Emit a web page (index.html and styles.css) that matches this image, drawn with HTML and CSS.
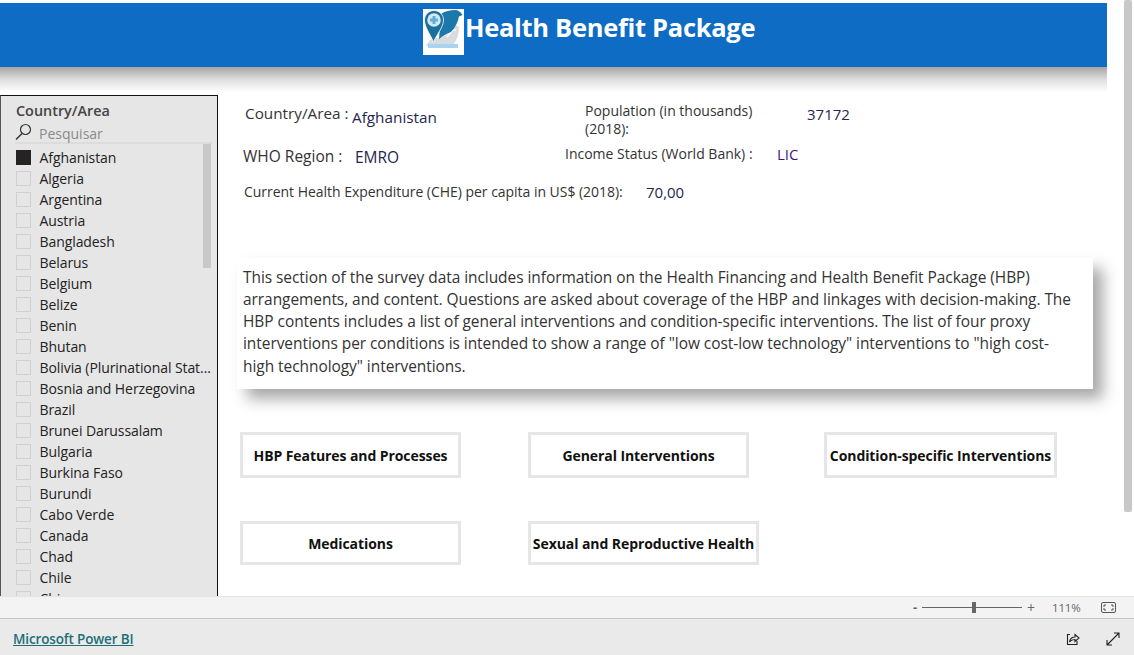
FILE: index.html
```html
<!DOCTYPE html>
<html lang="en">
<head>
<meta charset="utf-8">
<title>Health Benefit Package</title>
<link rel="stylesheet" href="styles.css">
</head>
<body>
<div class="report">
  <div class="page-scroll"></div>
  <div class="canvas">
    <header class="banner">
      <svg class="logo" viewBox="0 0 41 46" aria-hidden="true">
        <rect width="41" height="46" fill="#fff"/>
        <path d="M3 37C6 31 10 28 14 29L24 26L33 16L36 18C36 25 34 31 30 36Z" fill="#d9dcdf"/>
        <path d="M24 28L30 21L33 21" fill="none" stroke="#fff" stroke-width="1.200"/>
        <path d="M18 5C22 2 27 1 32 1C35 1 38 3 39.500 6L36 7.500C35 13 32 19 28 23C25 24 21 26 16 30Z" fill="#1c78ab"/>
        <path d="M1.500 11C1.500 6 5.500 1.500 11 1.500C16.500 1.500 20.500 6 20.500 11C20.500 18 14 25 10.500 33C7 25 1.500 18 1.500 11Z" fill="#1a6f9c" stroke="#fff" stroke-width="0.800"/>
        <circle cx="11" cy="11" r="6.800" fill="#d3e9f6"/>
        <path d="M9.500 7H12.500V9.500H15V12.500H12.500V15H9.500V12.500H7V9.500H9.500Z" fill="#62aedb"/>
        <rect x="5" y="35" width="30" height="4" fill="#a8d4f2"/>
      </svg>
      <h1 class="title">Health Benefit Package</h1>
    </header>
    <div class="banner-shadow"></div>
    <div class="body">
      <aside class="slicer">
        <div class="slicer-title">Country/Area</div>
        <div class="slicer-search">
          <svg class="search-icon" viewBox="0 0 17 17" aria-hidden="true"><circle cx="10.500" cy="6.500" r="5" fill="none" stroke="#333" stroke-width="1.200"/><path d="M7 10.500L1 16.500" stroke="#333" stroke-width="1.400"/></svg>
          <span>Pesquisar</span>
        </div>
        <div class="slicer-list">
          <div class="slicer-thumb"></div>
          <div class="item"><i class="box on"></i>Afghanistan</div>
          <div class="item"><i class="box"></i>Algeria</div>
          <div class="item"><i class="box"></i>Argentina</div>
          <div class="item"><i class="box"></i>Austria</div>
          <div class="item"><i class="box"></i>Bangladesh</div>
          <div class="item"><i class="box"></i>Belarus</div>
          <div class="item"><i class="box"></i>Belgium</div>
          <div class="item"><i class="box"></i>Belize</div>
          <div class="item"><i class="box"></i>Benin</div>
          <div class="item"><i class="box"></i>Bhutan</div>
          <div class="item"><i class="box"></i>Bolivia (Plurinational Stat...</div>
          <div class="item"><i class="box"></i>Bosnia and Herzegovina</div>
          <div class="item"><i class="box"></i>Brazil</div>
          <div class="item"><i class="box"></i>Brunei Darussalam</div>
          <div class="item"><i class="box"></i>Bulgaria</div>
          <div class="item"><i class="box"></i>Burkina Faso</div>
          <div class="item"><i class="box"></i>Burundi</div>
          <div class="item"><i class="box"></i>Cabo Verde</div>
          <div class="item"><i class="box"></i>Canada</div>
          <div class="item"><i class="box"></i>Chad</div>
          <div class="item"><i class="box"></i>Chile</div>
          <div class="item"><i class="box"></i>China</div>
        </div>
      </aside>
      <main class="content">
        <div class="info-row row-one">
          <span class="label country-label">Country/Area :</span>
          <span class="value country-value">Afghanistan</span>
          <span class="label pop-label"><span class="pop-text">Population (in thousands) (2018):</span></span>
          <span class="value pop-value">37172</span>
        </div>
        <div class="info-row row-two">
          <span class="label who-label">WHO Region :</span>
          <span class="value who-value">EMRO</span>
          <span class="label income-label">Income Status (World Bank) :</span>
          <span class="value lic-value">LIC</span>
        </div>
        <div class="info-row row-three">
          <span class="label che-label">Current Health Expenditure (CHE) per capita in US$ (2018):</span>
          <span class="value che-value">70,00</span>
        </div>
        <p class="description">This section of the survey data includes information on the Health Financing and Health Benefit Package (HBP) arrangements, and content. Questions are asked about coverage of the HBP and linkages with decision-making. The HBP contents includes a list of general interventions and condition-specific interventions. The list of four proxy interventions per conditions is intended to show a range of "low cost-low technology" interventions to "high cost-high technology" interventions.</p>
        <div class="buttons buttons-top">
          <div class="btn btn-a">HBP Features and Processes</div>
          <div class="btn btn-b">General Interventions</div>
          <div class="btn btn-c">Condition-specific Interventions</div>
        </div>
        <div class="buttons buttons-bottom">
          <div class="btn btn-a btn-low">Medications</div>
          <div class="btn btn-d btn-low">Sexual and Reproductive Health</div>
        </div>
      </main>
    </div>
  </div>
</div>
<div class="zoom-bar">
  <span class="zoom-sign">-</span>
  <div class="zoom-track"><div class="zoom-knob"></div></div>
  <span class="zoom-sign plus">+</span>
  <span class="zoom-pct">111%</span>
  <svg class="fit-icon" viewBox="0 0 15 11" aria-hidden="true"><rect x="0.500" y="0.500" width="14" height="10" rx="1.500" fill="none" stroke="#555"/><path d="M5 3H3V5M10 3H12V5M5 8H3V6M10 8H12V6" fill="none" stroke="#555"/></svg>
</div>
<footer class="footer">
  <a class="pbi-link" href="#">Microsoft Power BI</a>
  <div class="footer-icons">
    <svg class="foot-icon" viewBox="0 0 14 14" aria-hidden="true"><path d="M4 2.500H1.500V12.500H11V9" fill="none" stroke="#222" stroke-width="1.100"/><path d="M3.500 10C4 7 6 5 9 5V2.500L13 6L9 9.500V7.500C7 7.500 5 8 3.500 10Z" fill="none" stroke="#222" stroke-width="1.100"/></svg>
    <svg class="foot-icon" viewBox="0 0 14 14" aria-hidden="true"><path d="M1 13L13 1M8 1H13V6M1 8V13H6" fill="none" stroke="#222" stroke-width="1.100"/></svg>
  </div>
</footer>
</body>
</html>
```
FILE: styles.css
```css
* { box-sizing: border-box; }
html, body { margin: 0; padding: 0; }
body {
  width: 1134px;
  height: 655px;
  overflow: hidden;
  background: #fff;
  font-family: "Open Sans", "Noto Sans", sans-serif;
  color: #252423;
  display: flex;
  flex-direction: column;
}
.report { position: relative; height: 596px; overflow: hidden; flex: none; }
.page-scroll {
  position: absolute;
  left: 1124px;
  top: 0;
  width: 8px;
  height: 512px;
  background: #c8c8c8;
  border-radius: 2px;
}
.canvas { width: 1107px; padding-top: 3px; }
.banner {
  height: 64px;
  background: #0e6cc4;
  display: flex;
  align-items: flex-start;
  padding: 6px 0 0 423px;
}
.logo { width: 41px; height: 46px; flex: none; }
.title {
  margin: 1px 0 0 1px;
  color: #fff;
  font-size: 25.500px;
  line-height: 34px;
  font-weight: 700;
  letter-spacing: -0.300px;
  white-space: nowrap;
}
.banner-shadow { height: 28px; background: linear-gradient(#a4a4a4, #dedede 45%, #fff 90%); }
.body { display: flex; align-items: flex-start; }
.slicer {
  width: 218px;
  height: 503px;
  flex: none;
  background: #e6e6e6;
  border: 1px solid #111;
  border-bottom: none;
  border-left-color: #555;
  overflow: hidden;
  padding: 5px 0 0 14px;
}
.slicer-title { font-size: 14.400px; line-height: 20px; font-weight: 600; color: #444; padding-left: 1px; }
.slicer-search {
  display: flex;
  align-items: center;
  gap: 7px;
  height: 23px;
  padding-top: 4px;
  margin: 0 5px 0 0;
  border-bottom: 2px solid #dcdcdc;
  font-size: 14px;
  color: #8a8a8a;
}
.search-icon { width: 17px; height: 17px; flex: none; margin-top: -4px; }
.slicer-list { position: relative; width: 197px; padding-top: 3px; }
.slicer-thumb {
  position: absolute;
  left: 188px;
  top: 0;
  width: 8px;
  height: 124px;
  background: #c8c8c8;
}
.item {
  display: flex;
  align-items: center;
  height: 21px;
  font-size: 14px;
  color: #222;
  white-space: nowrap;
  letter-spacing: -0.080px;
}
.box {
  width: 15px;
  height: 15px;
  flex: none;
  margin: 0 8.500px 0 1px;
  border: 1px solid #d0d0d0;
}
.box.on { background: #252423; border-color: #252423; }
.content { width: 889px; flex: none; padding-left: 19px; }
.info-row { display: flex; align-items: flex-start; }
.label, .value { display: block; flex: none; font-size: 14px; line-height: 20px; color: #333; white-space: nowrap; }
.value { color: #26264f; }
.row-one { height: 46px; padding: 8px 0 0 8px; }
.country-label { width: 107px; font-size: 15.300px; }
.country-value { width: 233px; margin-top: 4px; font-size: 15.300px; }
.pop-label { width: 222px; margin-top: -1px; }
.pop-text { display: block; width: 172px; white-space: normal; font-size: 14px; line-height: 18px; }
.pop-value { margin-top: 1px; font-size: 15px; }
.row-two { height: 38px; padding: 5px 0 0 6px; }
.who-label { width: 112px; font-size: 15.500px; }
.who-value { width: 210px; margin-top: 1px; font-size: 15.500px; }
.income-label { width: 212px; margin-top: -2px; }
.lic-value { margin-top: -2px; font-size: 15px; color: #3b1a78; }
.row-three { height: 66px; padding: 3px 0 0 7px; }
.che-label { width: 402px; letter-spacing: -0.030px; }
.che-value { font-size: 15px; }
.description {
  margin: 13px 0 0 0;
  width: 856px;
  height: 131px;
  padding: 7.500px 18px 0 6px;
  background: #fff;
  font-size: 15.470px;
  line-height: 22.300px;
  color: #333;
  letter-spacing: -0.050px;
  box-shadow: 10px 10px 14px rgba(0, 0, 0, 0.34);
  position: relative;
}
.buttons { display: flex; align-items: flex-start; padding-left: 3px; }
.buttons-top { margin-top: 43px; height: 89px; }
.buttons-bottom { height: 44px; }
.btn {
  flex: none;
  height: 46px;
  display: flex;
  align-items: center;
  justify-content: center;
  border: 3px solid #e6e6e6;
  font-size: 14px;
  font-weight: 700;
  color: #111;
  white-space: nowrap;
  letter-spacing: -0.080px;
}
.btn-low { height: 44px; }
.btn-a { width: 221px; margin-right: 67px; }
.btn-b { width: 221px; margin-right: 75px; }
.btn-c { width: 233px; }
.btn-d { width: 231px; }
.zoom-bar {
  height: 23px;
  flex: none;
  background: #f3f3f3;
  border-top: 1px solid #e4e4e4;
  border-bottom: 1px solid #c8c8c8;
  display: flex;
  align-items: center;
  padding-left: 913px;
  font-size: 12px;
  color: #666;
}
.zoom-sign { width: 9px; font-size: 13px; font-weight: 700; line-height: 1; }
.zoom-sign.plus { width: 12px; margin-left: 5px; font-weight: 400; font-size: 14px; }
.zoom-track { position: relative; width: 100px; height: 1px; background: #666; }
.zoom-knob { position: absolute; left: 50px; top: -5px; width: 4px; height: 11px; background: #666; }
.zoom-pct { width: 49px; margin-left: 13px; font-size: 11.500px; letter-spacing: -0.200px; }
.fit-icon { width: 15px; height: 11px; flex: none; }
.footer {
  flex: 1;
  background: #eaeaea;
  display: flex;
  align-items: center;
  justify-content: space-between;
  padding: 4px 14px 0 13px;
}
.pbi-link {
  font-size: 13.500px;
  font-weight: 600;
  color: #1e6f76;
  text-decoration: underline;
  letter-spacing: -0.150px;
}
.footer-icons { display: flex; gap: 26px; }
.foot-icon { width: 14px; height: 14px; display: block; }
```
